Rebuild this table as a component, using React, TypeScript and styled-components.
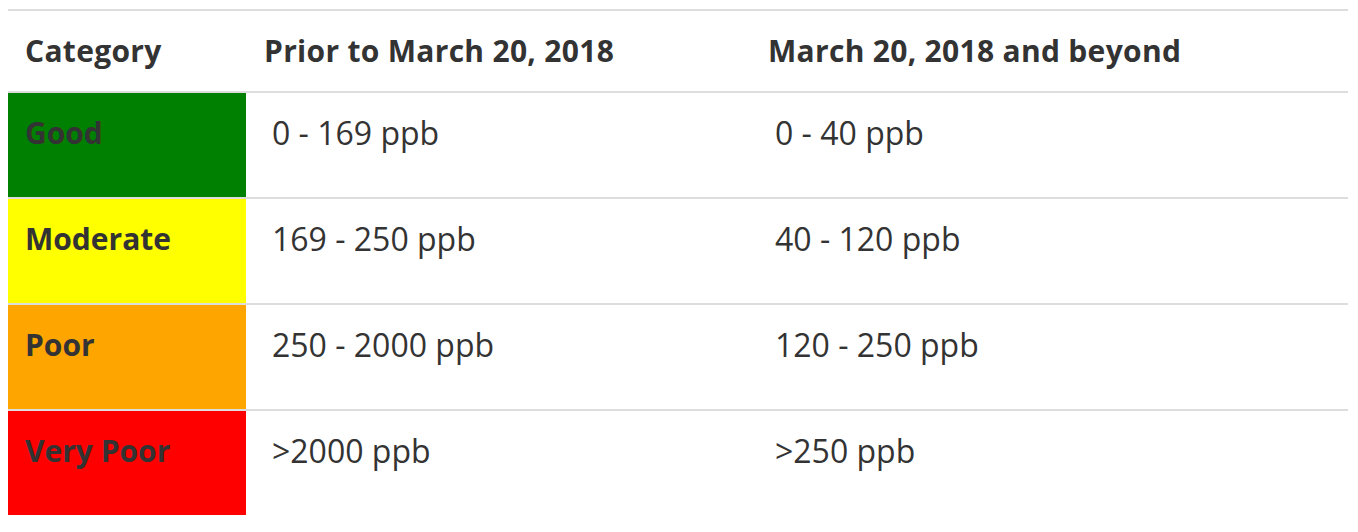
import React from "react";
import styled, { createGlobalStyle } from "styled-components";

const GlobalStyle = createGlobalStyle`
  html, body {
    margin: 0;
    padding: 0;
    background: #ffffff;
  }
  body {
    font-family: "Open Sans", "Liberation Sans", sans-serif;
    color: #333333;
  }
`;

const Page = styled.div`
  padding: 9px 10px 0 8px;
`;

const Table = styled.table`
  width: 1340px;
  table-layout: fixed;
  border-collapse: separate;
  border-spacing: 0;
`;

const HeadCell = styled.th<{ $w: number; $pl: number }>`
  width: ${(p) => p.$w}px;
  padding: 0 0 0 ${(p) => p.$pl}px;
  box-sizing: border-box;
  height: 84px;
  line-height: 80px;
  text-align: left;
  font-size: 30px;
  font-weight: 700;
  letter-spacing: 0.3px;
  color: #333333;
  border-top: 2px solid #dddddd;
  border-bottom: 2px solid #dddddd;
  white-space: nowrap;
`;

const Cell = styled.td<{ $bg?: string; $pl: number; $last?: boolean; $bold?: boolean }>`
  padding: 18px 0 42px ${(p) => p.$pl}px;
  line-height: 44px;
  font-size: ${(p) => (p.$bold ? 30 : 32)}px;
  font-weight: ${(p) => (p.$bold ? 700 : 400)};
  color: #333333;
  background: ${(p) => p.$bg || "transparent"};
  border-bottom: ${(p) => (p.$last ? "none" : "2px solid #dddddd")};
  vertical-align: top;
  white-space: nowrap;
`;

const rows = [
  { name: "Good", color: "#008000", prior: "0 - 169 ppb", after: "0 - 40 ppb" },
  { name: "Moderate", color: "#ffff00", prior: "169 - 250 ppb", after: "40 - 120 ppb" },
  { name: "Poor", color: "#ffa500", prior: "250 - 2000 ppb", after: "120 - 250 ppb" },
  { name: "Very Poor", color: "#ff0000", prior: ">2000 ppb", after: ">250 ppb" },
];

export default function App() {
  return (
    <Page>
      <GlobalStyle />
      <Table>
        <thead>
          <tr>
            <HeadCell $w={238} $pl={17}>Category</HeadCell>
            <HeadCell $w={504} $pl={18}>Prior to March 20, 2018</HeadCell>
            <HeadCell $w={598} $pl={18}>March 20, 2018 and beyond</HeadCell>
          </tr>
        </thead>
        <tbody>
          {rows.map((r, i) => {
            const last = i === rows.length - 1;
            return (
              <tr key={r.name}>
                <Cell $bg={r.color} $pl={17} $last={last} $bold>
                  {r.name}
                </Cell>
                <Cell $pl={26} $last={last}>{r.prior}</Cell>
                <Cell $pl={25} $last={last}>{r.after}</Cell>
              </tr>
            );
          })}
        </tbody>
      </Table>
    </Page>
  );
}
